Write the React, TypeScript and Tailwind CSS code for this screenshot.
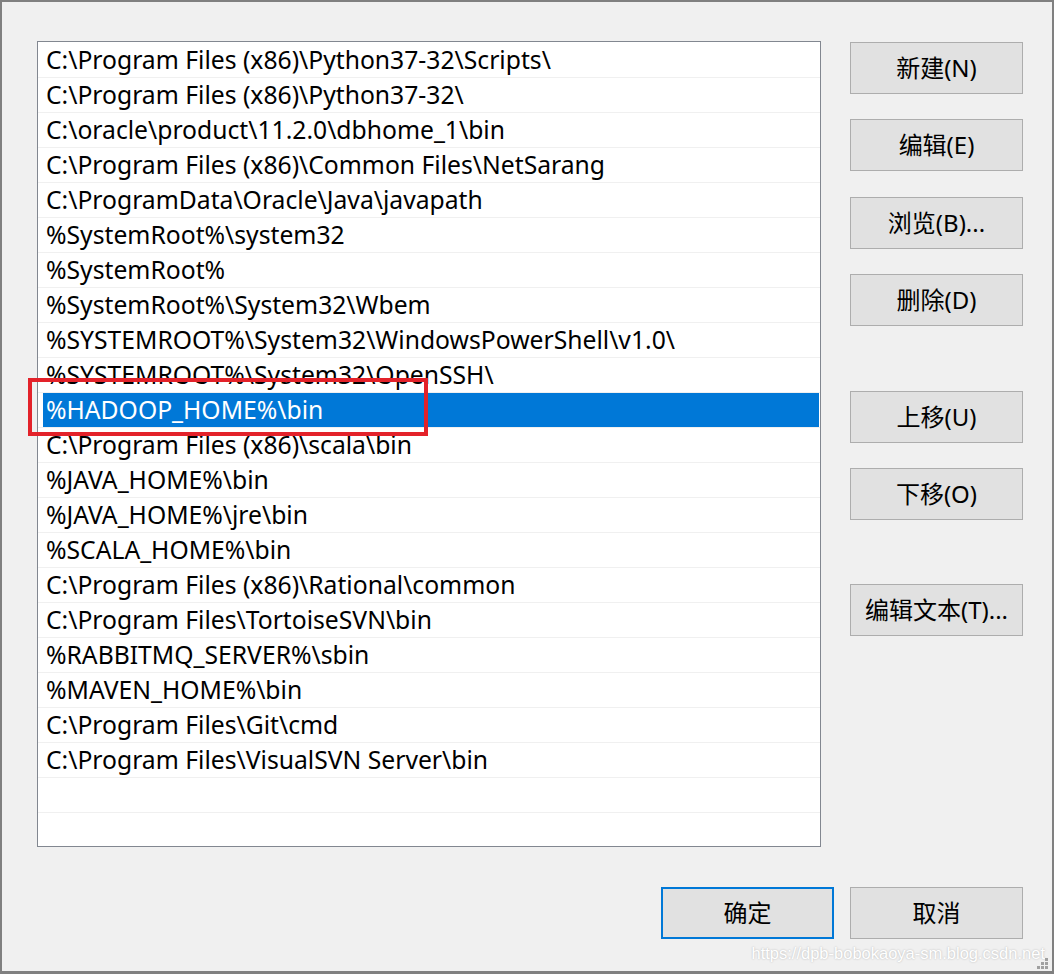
import React from 'react';

const PATHS = [
  'C:\\Program Files (x86)\\Python37-32\\Scripts\\',
  'C:\\Program Files (x86)\\Python37-32\\',
  'C:\\oracle\\product\\11.2.0\\dbhome_1\\bin',
  'C:\\Program Files (x86)\\Common Files\\NetSarang',
  'C:\\ProgramData\\Oracle\\Java\\javapath',
  '%SystemRoot%\\system32',
  '%SystemRoot%',
  '%SystemRoot%\\System32\\Wbem',
  '%SYSTEMROOT%\\System32\\WindowsPowerShell\\v1.0\\',
  '%SYSTEMROOT%\\System32\\OpenSSH\\',
  '%HADOOP_HOME%\\bin',
  'C:\\Program Files (x86)\\scala\\bin',
  '%JAVA_HOME%\\bin',
  '%JAVA_HOME%\\jre\\bin',
  '%SCALA_HOME%\\bin',
  'C:\\Program Files (x86)\\Rational\\common',
  'C:\\Program Files\\TortoiseSVN\\bin',
  '%RABBITMQ_SERVER%\\sbin',
  '%MAVEN_HOME%\\bin',
  'C:\\Program Files\\Git\\cmd',
  'C:\\Program Files\\VisualSVN Server\\bin',
  '',
  '',
];

const SELECTED = 10;

const font = "font-['Noto_Sans','Noto_Sans_CJK_SC',sans-serif]";

const Button = ({ label, primary, className }: { label: string; primary?: boolean; className?: string }) => (
  <button
    type="button"
    className={`w-[173px] h-[52px] bg-[#e1e1e1] text-[24px] text-black flex items-center justify-center ${
      primary ? 'border-2 border-[#0078d7]' : 'border border-[#adadad]'
    } ${className ?? ''}`}
  >
    {label}
  </button>
);

export default function App() {
  return (
    <div className={`relative w-[1054px] h-[974px] bg-[#f0f0f0] border-2 border-b-[3px] border-[#808080] overflow-hidden ${font}`}>
      <div className="flex">
        <div className="ml-[35px] mt-[39px] w-[784px] h-[806px] bg-white border border-[#828790] pt-[1px] overflow-hidden">
          {PATHS.map((p, i) => (
            <div key={i} className="h-[35px] border-b border-[#f0f0f0] pl-[1px] flex">
              <div
                className={`ml-1 mr-[1px] flex-1 flex items-center pl-[3px] text-[24.7px] leading-none whitespace-nowrap ${
                  i === SELECTED ? 'bg-[#0078d7] text-white' : 'text-black'
                }`}
              >
                {p}
              </div>
            </div>
          ))}
        </div>

        <div className="ml-[29px] mt-[40px] flex flex-col">
          <Button label="新建(N)" />
          <Button label="编辑(E)" className="mt-[25px]" />
          <Button label="浏览(B)..." className="mt-[26px]" />
          <Button label="删除(D)" className="mt-[25px]" />
          <Button label="上移(U)" className="mt-[65px]" />
          <Button label="下移(O)" className="mt-[25px]" />
          <Button label="编辑文本(T)..." className="mt-[64px]" />
        </div>
      </div>

      <div className="flex justify-end gap-[16px] mr-[29px] mt-[40px]">
        <Button label="确定" primary />
        <Button label="取消" />
      </div>

      {/* red annotation box */}
      <div className="absolute left-[26px] top-[376px] w-[400px] h-[58px] border-[4px] border-[#e3222a]" />

      {/* watermark */}
      <div className="absolute right-[7px] bottom-[5px] text-[16.5px] text-white font-['Liberation_Sans',sans-serif] [text-shadow:0_0_2px_#b0b0b0]">
        https://dpb-bobokaoya-sm.blog.csdn.net
      </div>
      <div className="absolute right-[4px] bottom-[2px] grid grid-cols-3 gap-[1px]">
        <span className="w-[3px] h-[3px]" />
        <span className="w-[3px] h-[3px]" />
        <span className="w-[3px] h-[3px] bg-[#a0a0a0]" />
        <span className="w-[3px] h-[3px]" />
        <span className="w-[3px] h-[3px] bg-[#a0a0a0]" />
        <span className="w-[3px] h-[3px] bg-[#a0a0a0]" />
        <span className="w-[3px] h-[3px] bg-[#a0a0a0]" />
        <span className="w-[3px] h-[3px] bg-[#a0a0a0]" />
        <span className="w-[3px] h-[3px] bg-[#a0a0a0]" />
      </div>
    </div>
  );
}
